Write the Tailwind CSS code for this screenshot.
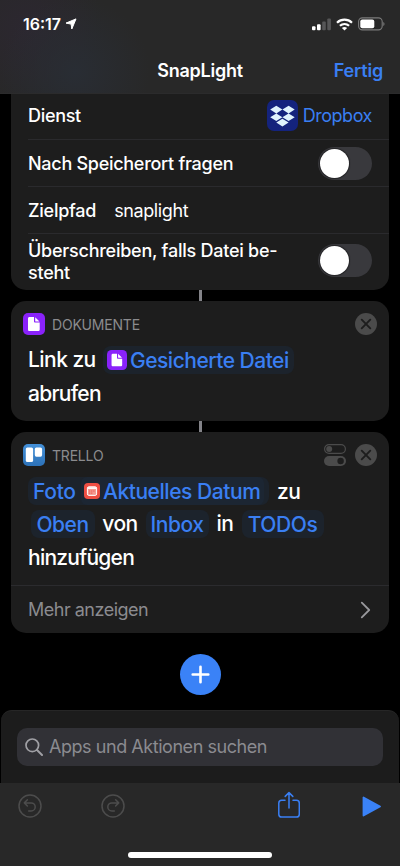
<!DOCTYPE html>
<html lang="de">
<head>
<meta charset="utf-8">
<title>SnapLight</title>
<script src="https://cdn.jsdelivr.net/npm/@tailwindcss/browser@4"></script>
</head>
<body class="bg-black">
<div class="w-[400px] h-[866px] overflow-hidden bg-black text-white flex flex-col font-['Inter',sans-serif] whitespace-nowrap">

  <header class="h-[94px] shrink-0 bg-[#282828] bg-[radial-gradient(circle_at_75px_72px,#292d34_0,transparent_75px),radial-gradient(circle_at_28px_28px,#2c2730_0,transparent_75px)] border-b border-[#2b2b2c] flex flex-col">
    <div class="h-[49px] flex items-center pl-[23px] pr-[15px]">
      <span class="text-[16px] leading-[20px] font-semibold">16:17</span>
      <svg class="ml-[4px] w-[12px] h-[12px]" viewBox="0 0 12 12"><path d="M11 .9 6.8 11 6.1 6.1 1 5.1Z" fill="#fff" stroke="#fff" stroke-width="1" stroke-linejoin="round"/></svg>
      <svg class="ml-auto w-[19px] h-[13px]" viewBox="0 0 19 13"><g fill="#fff"><rect x="0" y="8.3" width="3.5" height="4" rx="1"/><rect x="5" y="6.3" width="3.6" height="6" rx="1"/></g><g fill="#565657"><rect x="10.2" y="3.4" width="3.6" height="8.9" rx="1"/><rect x="15.3" y=".5" width="3.6" height="11.8" rx="1"/></g></svg>
      <svg class="ml-[5px] w-[17px] h-[13px]" viewBox="0 0 17 13"><g fill="none" stroke="#fff" stroke-width="2.2"><path d="M1 4.7C5.3.7 11.7.7 16 4.7"/><path d="M3.9 7.8c2.7-2.4 6.5-2.4 9.2 0"/></g><path d="M8.500 12.600 5.900 10c1.500-1.300 3.700-1.300 5.200 0Z" fill="#fff"/></svg>
      <svg class="ml-[5px] w-[27px] h-[14px]" viewBox="0 0 27 14"><rect x=".6" y=".9" width="23.600" height="12" rx="3.800" fill="none" stroke="#7b7b7b" stroke-width="1.100"/><rect x="2.300" y="2.600" width="14" height="8.600" rx="2" fill="#fff"/><path d="M25.300 5v4c1.600-.6 1.600-3.400 0-4Z" fill="#7b7b7b"/></svg>
    </div>
    <div class="grid grid-cols-3 items-center h-[45px] text-[18px] leading-[22px] font-semibold">
      <span></span>
      <span class="text-center tracking-[-0.25px]">SnapLight</span>
      <span class="text-right pr-[17px] text-[#3a7ff3] tracking-[-0.2px]">Fertig</span>
    </div>
  </header>

  <main class="h-[616px] shrink-0 px-[11px] flex flex-col items-center">
    <section class="w-[378px] h-[196px] shrink-0 bg-[#1d1d1d] rounded-b-[15px] pl-[17px] text-[18px] leading-[22px] font-medium">
      <div class="h-[46px] pb-[2px] flex items-center pr-[17px] border-b border-[#2a2a2d]">
        <span class="tracking-[-0.3px]">Dienst</span>
        <svg class="ml-auto w-[31px] h-[31px]" viewBox="0 0 31 31"><rect width="31" height="31" rx="7" fill="#14237d"/><path fill="#dff3fd" d="m9.3 5.7 6.1 3.8-6.1 3.9-6.1-3.9Zm12.300 0 6.100 3.800-6.100 3.900-6.200-3.900ZM9.300 13.400l6.100 3.800-6.100 3.900-6.100-3.900Zm12.300 0 6.100 3.800-6.100 3.900-6.200-3.900ZM15.400 18.700l6.200 3.900-6.200 3.800-6.100-3.800Z"/></svg>
        <span class="ml-[5px] font-normal text-[#3a7ff3] tracking-[-0.45px]">Dropbox</span>
      </div>
      <div class="h-[47px] flex items-center justify-between pr-[17px] border-b border-[#2a2a2d]">
        <span class="tracking-[-0.28px] pt-[1px]">Nach Speicherort fragen</span>
        <span class="w-[54px] h-[33px] rounded-full bg-[#39393d] flex items-center px-[2px]"><span class="size-[29px] rounded-full bg-white shadow-[0_0_1px_1px_#0006]"></span></span>
      </div>
      <div class="h-[47px] pt-[1px] flex items-center border-b border-[#2a2a2d]">
        <span class="tracking-[-0.25px]">Zielpfad</span>
        <span class="ml-[18px] font-normal tracking-[-0.4px]">snaplight</span>
      </div>
      <div class="h-[55px] flex items-center justify-between pr-[17px]">
        <span class="tracking-[-0.24px]">Überschreiben, falls Datei be-<br>steht</span>
        <span class="w-[54px] h-[33px] rounded-full bg-[#39393d] flex items-center px-[2px] mb-[2px]"><span class="size-[29px] rounded-full bg-white shadow-[0_0_1px_1px_#0006]"></span></span>
      </div>
    </section>

    <div class="w-[3px] h-[11px] shrink-0 bg-[#838388]"></div>

    <section class="w-[378px] h-[120px] shrink-0 bg-[#1d1d1d] rounded-[15px]">
      <div class="h-[45px] pt-[1px] flex items-center pl-[12px] pr-[12px]">
        <svg class="w-[22px] h-[22px]" viewBox="0 0 22 22"><rect width="22" height="22" rx="5" fill="#8a22fa"/><path fill="#fff" d="M6.600 4H11v4.400c0 .7.5 1.200 1.200 1.200h4.500v6.800c0 1-.6 1.600-1.600 1.600H6.600C5.600 18 5 17.400 5 16.400V5.600C5 4.600 5.600 4 6.600 4ZM12.200 4.200l4.300 4.300h-3.700c-.4 0-.6-.2-.6-.6Z"/></svg>
        <span class="ml-[7px] text-[14px] text-[#8b8b8e] tracking-[-0.2px]">DOKUMENTE</span>
        <svg class="ml-auto w-[22px] h-[22px]" viewBox="0 0 22 22"><circle cx="11" cy="11" r="11" fill="#4b4b4b"/><path d="m6.700 6.700 8.600 8.600M15.300 6.700l-8.600 8.600" stroke="#1d1d1d" stroke-width="1.900" stroke-linecap="round"/></svg>
      </div>
      <div class="pl-[17px] text-[21px] leading-[30px] font-medium">
        <div class="flex items-center h-[28px]">
          <span class="w-[75px] tracking-[-0.55px]">Link zu</span>
          <span class="w-[191px] h-[28px] rounded-[8px] bg-[#1c232c] flex items-center pl-[4px] text-[#3a7ff3]">
            <svg class="w-[20px] h-[20px] mr-[3px] shrink-0" viewBox="0 0 22 22"><rect width="22" height="22" rx="5" fill="#8a22fa"/><path fill="#fff" d="M6.600 4H11v4.400c0 .7.5 1.200 1.200 1.200h4.500v6.800c0 1-.6 1.600-1.600 1.600H6.600C5.600 18 5 17.400 5 16.400V5.600C5 4.600 5.600 4 6.600 4ZM12.200 4.200l4.300 4.300h-3.700c-.4 0-.6-.2-.6-.6Z"/></svg>
            <span class="tracking-[-0.5px] pt-[1px]">Gesicherte Datei</span>
          </span>
        </div>
        <div class="mt-[5px] tracking-[-0.75px]">abrufen</div>
      </div>
    </section>

    <div class="w-[3px] h-[11px] shrink-0 bg-[#838388]"></div>

    <section class="w-[378px] h-[201px] shrink-0 bg-[#1d1d1d] rounded-[15px]">
      <div class="h-[45px] pt-[1px] flex items-center pl-[12px] pr-[12px]">
        <svg class="w-[22px] h-[22px]" viewBox="0 0 22 22"><defs><linearGradient id="trello" x2="0" y2="1"><stop stop-color="#4490d8"/><stop offset="1" stop-color="#2d72b8"/></linearGradient></defs><rect width="22" height="22" rx="5" fill="url(#trello)"/><rect x="2.800" y="3.500" width="7.300" height="14.500" rx="1.600" fill="#fff"/><rect x="11.800" y="3.500" width="7.300" height="9.200" rx="1.600" fill="#fff"/></svg>
        <span class="ml-[7px] text-[14px] text-[#8b8b8e] tracking-[-0.2px]">TRELLO</span>
        <svg class="ml-auto mr-[9px] w-[22px] h-[22px]" viewBox="0 0 22 22"><rect x=".6" y=".6" width="20.800" height="8.800" rx="4.400" fill="none" stroke="#4b4b4b" stroke-width="1.200"/><circle cx="5.200" cy="5" r="3" fill="#4b4b4b"/><rect y="12" width="22" height="10" rx="5" fill="#4b4b4b"/><circle cx="16.600" cy="17" r="3.200" fill="#1d1d1d"/></svg>
        <svg class="w-[22px] h-[22px]" viewBox="0 0 22 22"><circle cx="11" cy="11" r="11" fill="#4b4b4b"/><path d="m6.700 6.700 8.600 8.600M15.300 6.700l-8.600 8.600" stroke="#1d1d1d" stroke-width="1.900" stroke-linecap="round"/></svg>
      </div>
      <div class="h-[108px] pl-[17px] text-[21px] leading-[30px] font-medium tracking-[-0.45px] flex flex-col gap-[5px]">
        <div class="flex items-center h-[28px]">
          <span class="w-[241px] h-[28px] rounded-[8px] bg-[#1c232c] flex items-center pl-[5px] text-[#3a7ff3]">
            <span class="w-[48px] tracking-[-0.3px] pt-[1px]">Foto</span>
            <span class="w-[183px] h-[28px] rounded-[6px] bg-[#1c2633] flex items-center pl-[3px]">
              <svg class="w-[16px] h-[16px] mr-[3px] shrink-0" viewBox="0 0 16 16"><rect width="16" height="16" rx="4" fill="#ee4e43"/><rect x="3.400" y="3.800" width="9.200" height="8.600" rx="1.500" fill="#f49a92" stroke="#fff" stroke-width="1"/><path d="M3.500 5.100h9" stroke="#fff" stroke-width="1.600"/><path d="M5 8h6M5 10.100h4" stroke="#ee5a50" stroke-width="1" stroke-dasharray="1.200 .6"/></svg>
              <span class="pt-[1px]">Aktuelles Datum</span>
            </span>
          </span>
          <span class="ml-[8px] tracking-[-0.6px] pt-[1px]">zu</span>
        </div>
        <div class="flex items-center h-[28px] pl-[3px]">
          <span class="w-[64px] h-[28px] rounded-[8px] bg-[#1c232c] text-center text-[#3a7ff3] pr-[1px]">Oben</span>
          <span class="w-[51px] text-center pr-[1px]">von</span>
          <span class="w-[63px] h-[28px] rounded-[8px] bg-[#1c232c] text-center text-[#3a7ff3] pr-[1px]">Inbox</span>
          <span class="w-[33px] text-center pr-[1px]">in</span>
          <span class="w-[82px] h-[28px] rounded-[8px] bg-[#1c232c] text-center text-[#3a7ff3] pr-[1px]">TODOs</span>
        </div>
        <div class="tracking-[-0.75px]">hinzufügen</div>
      </div>
      <div class="h-[48px] border-t border-[#2b2b2e] flex items-center justify-between pl-[17px] pr-[18px] text-[18px] text-[#8b8b8f]">
        <span class="tracking-[-0.5px]">Mehr anzeigen</span>
        <svg class="w-[11px] h-[18px]" viewBox="0 0 11 18"><path d="m1.800 1.600 7.400 7.400-7.400 7.400" fill="none" stroke="#98989c" stroke-width="1.800" stroke-linecap="round" stroke-linejoin="round"/></svg>
      </div>
    </section>

    <svg class="mt-[21px] w-[41px] h-[41px] shrink-0" viewBox="0 0 41 41"><circle cx="20.500" cy="20.500" r="20.500" fill="#3a82f7"/><path d="M20.500 12.700v15.600M12.700 20.500h15.600" stroke="#fff" stroke-width="2.600" stroke-linecap="round"/></svg>
  </main>

  <section class="h-[73px] shrink-0 mx-[1px] bg-[#1c1c1c] rounded-t-[11px] border-t border-[#262626] pt-[17px] px-[16px]">
    <div class="h-[38px] rounded-[10px] bg-[#313136] flex items-center pl-[8px] text-[18px] text-[#8b8b90]">
      <svg class="w-[18px] h-[18px]" viewBox="0 0 18 18"><circle cx="7.300" cy="7.300" r="6.300" fill="none" stroke="#a0a0a5" stroke-width="1.700"/><path d="m12 12 5 5" stroke="#a0a0a5" stroke-width="2" stroke-linecap="round"/></svg>
      <span class="ml-[6px] pb-[2px] tracking-[-0.45px]">Apps und Aktionen suchen</span>
    </div>
  </section>

  <footer class="h-[83px] shrink-0 bg-[#282828] flex flex-col items-center">
    <div class="w-full h-[69px] flex items-start pt-[8px] pl-[18px] pr-[19px]">
      <svg class="mt-[3px] w-[24px] h-[24px]" viewBox="0 0 24 24" fill="none" stroke="#4c4c4c" stroke-width="1.500" stroke-linecap="round" stroke-linejoin="round"><circle cx="12" cy="12" r="11"/><path d="M9.400 5.800 6.300 8.900l3.100 3.100M6.500 8.900h6.700a4 4 0 0 1 0 8h-2.500"/></svg>
      <svg class="mt-[3px] ml-[59px] w-[24px] h-[24px]" viewBox="0 0 24 24" fill="none" stroke="#4c4c4c" stroke-width="1.500" stroke-linecap="round" stroke-linejoin="round"><circle cx="12" cy="12" r="11"/><path d="m14.600 5.800 3.100 3.100-3.100 3.100M17.500 8.900h-6.700a4 4 0 0 0 0 8h2.500"/></svg>
      <svg class="ml-auto w-[22px] h-[28px]" viewBox="0 0 22 28" fill="none" stroke="#3a7ff3" stroke-width="1.500" stroke-linecap="round" stroke-linejoin="round"><path d="M7 9.300H3.700c-1.900 0-2.900 1-2.900 2.900v11c0 1.900 1 2.900 2.900 2.900h14.700c1.900 0 2.900-1 2.900-2.900v-11c0-1.900-1-2.900-2.900-2.900H15M11 17V2M7.200 5.400 11 1.600l3.800 3.800"/></svg>
      <svg class="ml-[62px] mt-[5px] w-[19px] h-[21px]" viewBox="0 0 19 21"><path d="M1.500 1.500v18L18 10.500Z" fill="#3a82f7" stroke="#3a82f7" stroke-width="1.800" stroke-linejoin="round"/></svg>
    </div>
    <div class="w-[144px] h-[6px] rounded-full bg-white"></div>
  </footer>
</div>
</body>
</html>
